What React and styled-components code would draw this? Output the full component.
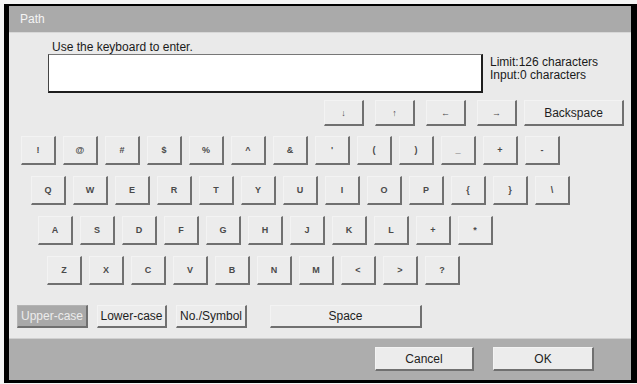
import styled, { createGlobalStyle } from 'styled-components';

const GlobalStyle = createGlobalStyle`
  html, body {
    margin: 0;
    padding: 0;
    background: #ffffff;
  }
  body {
    font-family: "Liberation Sans", Arial, sans-serif;
  }
`;

const Screen = styled.div`
  width: 637px;
  height: 384px;
  padding: 4px 0 1px 4px;
  box-sizing: border-box;
  background: #f4f4f4;
`;

const Frame = styled.div`
  width: 633px;
  height: 379px;
  box-sizing: border-box;
  border-style: solid;
  border-color: #000;
  border-width: 2px 6px 3px 5px;
  display: flex;
  flex-direction: column;
  background: #eaeaea;
`;

const TitleBar = styled.div`
  height: 26px;
  flex: none;
  background: #aaaaaa;
  color: #f4f4f4;
  font-size: 12px;
  display: flex;
  align-items: center;
  padding-left: 11px;
  border-bottom: 1px solid #d8d8d8;
`;

const Body = styled.div`
  flex: 1;
  display: flex;
  flex-direction: column;
  padding: 7px 7px 0 0;
`;

const EntryArea = styled.div`
  display: flex;
  align-items: flex-start;
  padding-left: 39px;
`;

const EntryColumn = styled.div`
  display: flex;
  flex-direction: column;
`;

const Prompt = styled.div`
  font-size: 12px;
  color: #1a1a1a;
  padding-left: 4px;
  line-height: 14px;
`;

const TextBox = styled.div`
  width: 435px;
  height: 39px;
  box-sizing: border-box;
  background: #fff;
  border-style: solid;
  border-color: #777 #1e1e1e #1e1e1e #444;
  border-width: 1px 2px 2px 1px;
`;

const Info = styled.div`
  margin: 16px 0 0 7px;
  font-size: 12px;
  color: #1a1a1a;
  line-height: 13px;
`;

const ArrowRow = styled.div`
  display: flex;
  justify-content: flex-end;
  gap: 11px;
  margin-top: 7px;
`;

const Key = styled.button`
  all: unset;
  box-sizing: border-box;
  width: ${({ w }) => w || 35}px;
  height: ${({ h }) => h || 29}px;
  margin-left: ${({ ml }) => ml || 0}px;
  display: flex;
  align-items: center;
  justify-content: center;
  background: ${({ active }) => (active ? '#a9a9a9' : '#ececec')};
  color: ${({ active, big }) => (active ? '#ececec' : big ? '#1e1e1e' : '#4a4a4a')};
  border-top: 1px solid ${({ active }) => (active ? '#b4b4b4' : '#f3f3f3')};
  border-left: 1px solid ${({ active }) => (active ? '#b4b4b4' : '#f3f3f3')};
  border-right: 2px solid #707070;
  border-bottom: 2px solid #707070;
  font-family: "Liberation Sans", Arial, sans-serif;
  font-size: ${({ big }) => (big ? '12px' : '9px')};
  font-weight: ${({ big }) => (big ? 'normal' : 'bold')};
  flex: none;
`;

const Keyboard = styled.div`
  display: flex;
  flex-direction: column;
  gap: 11px;
  margin-top: 10px;
`;

const KeyRow = styled.div`
  display: flex;
  gap: 7px;
  padding-left: ${({ indent }) => indent}px;
`;

const ModeRow = styled.div`
  display: flex;
  gap: 9px;
  padding-left: 8px;
  margin-top: 20px;
`;

const Footer = styled.div`
  height: 42px;
  flex: none;
  background: #adadad;
  border-top: 1px solid #d0d0d0;
  box-sizing: border-box;
  display: flex;
  justify-content: flex-end;
  align-items: flex-start;
  gap: 19px;
  padding: 8px 37px 0 0;
`;

const rows = [
  { indent: 12, keys: ['!', '@', '#', '$', '%', '^', '&', "'", '(', ')', '_', '+', '-'] },
  { indent: 22, keys: ['Q', 'W', 'E', 'R', 'T', 'Y', 'U', 'I', 'O', 'P', '{', '}', '\\'] },
  { indent: 29, keys: ['A', 'S', 'D', 'F', 'G', 'H', 'J', 'K', 'L', '+', '*'] },
  { indent: 38, keys: ['Z', 'X', 'C', 'V', 'B', 'N', 'M', '<', '>', '?'] },
];

export default function App() {
  return (
    <>
      <GlobalStyle />
      <Screen>
        <Frame>
          <TitleBar>Path</TitleBar>
          <Body>
            <EntryArea>
              <EntryColumn>
                <Prompt>Use the keyboard to enter.</Prompt>
                <TextBox />
              </EntryColumn>
              <Info>
                Limit:126 characters
                <br />
                Input:0 characters
              </Info>
            </EntryArea>
            <ArrowRow>
              <Key w={40} h={26}>↓</Key>
              <Key w={40} h={26}>↑</Key>
              <Key w={40} h={26}>←</Key>
              <Key w={40} h={26}>→</Key>
              <Key w={100} h={26} big ml={-4}>Backspace</Key>
            </ArrowRow>
            <Keyboard>
              {rows.map((row, i) => (
                <KeyRow key={i} indent={row.indent}>
                  {row.keys.map((k, j) => (
                    <Key key={j}>{k}</Key>
                  ))}
                </KeyRow>
              ))}
            </Keyboard>
            <ModeRow>
              <Key w={71} h={23} big active>Upper-case</Key>
              <Key w={70} h={23} big>Lower-case</Key>
              <Key w={71} h={23} big>No./Symbol</Key>
              <Key w={152} h={23} big ml={14}>Space</Key>
            </ModeRow>
          </Body>
          <Footer>
            <Key w={99} h={24} big>Cancel</Key>
            <Key w={101} h={24} big>OK</Key>
          </Footer>
        </Frame>
      </Screen>
    </>
  );
}
